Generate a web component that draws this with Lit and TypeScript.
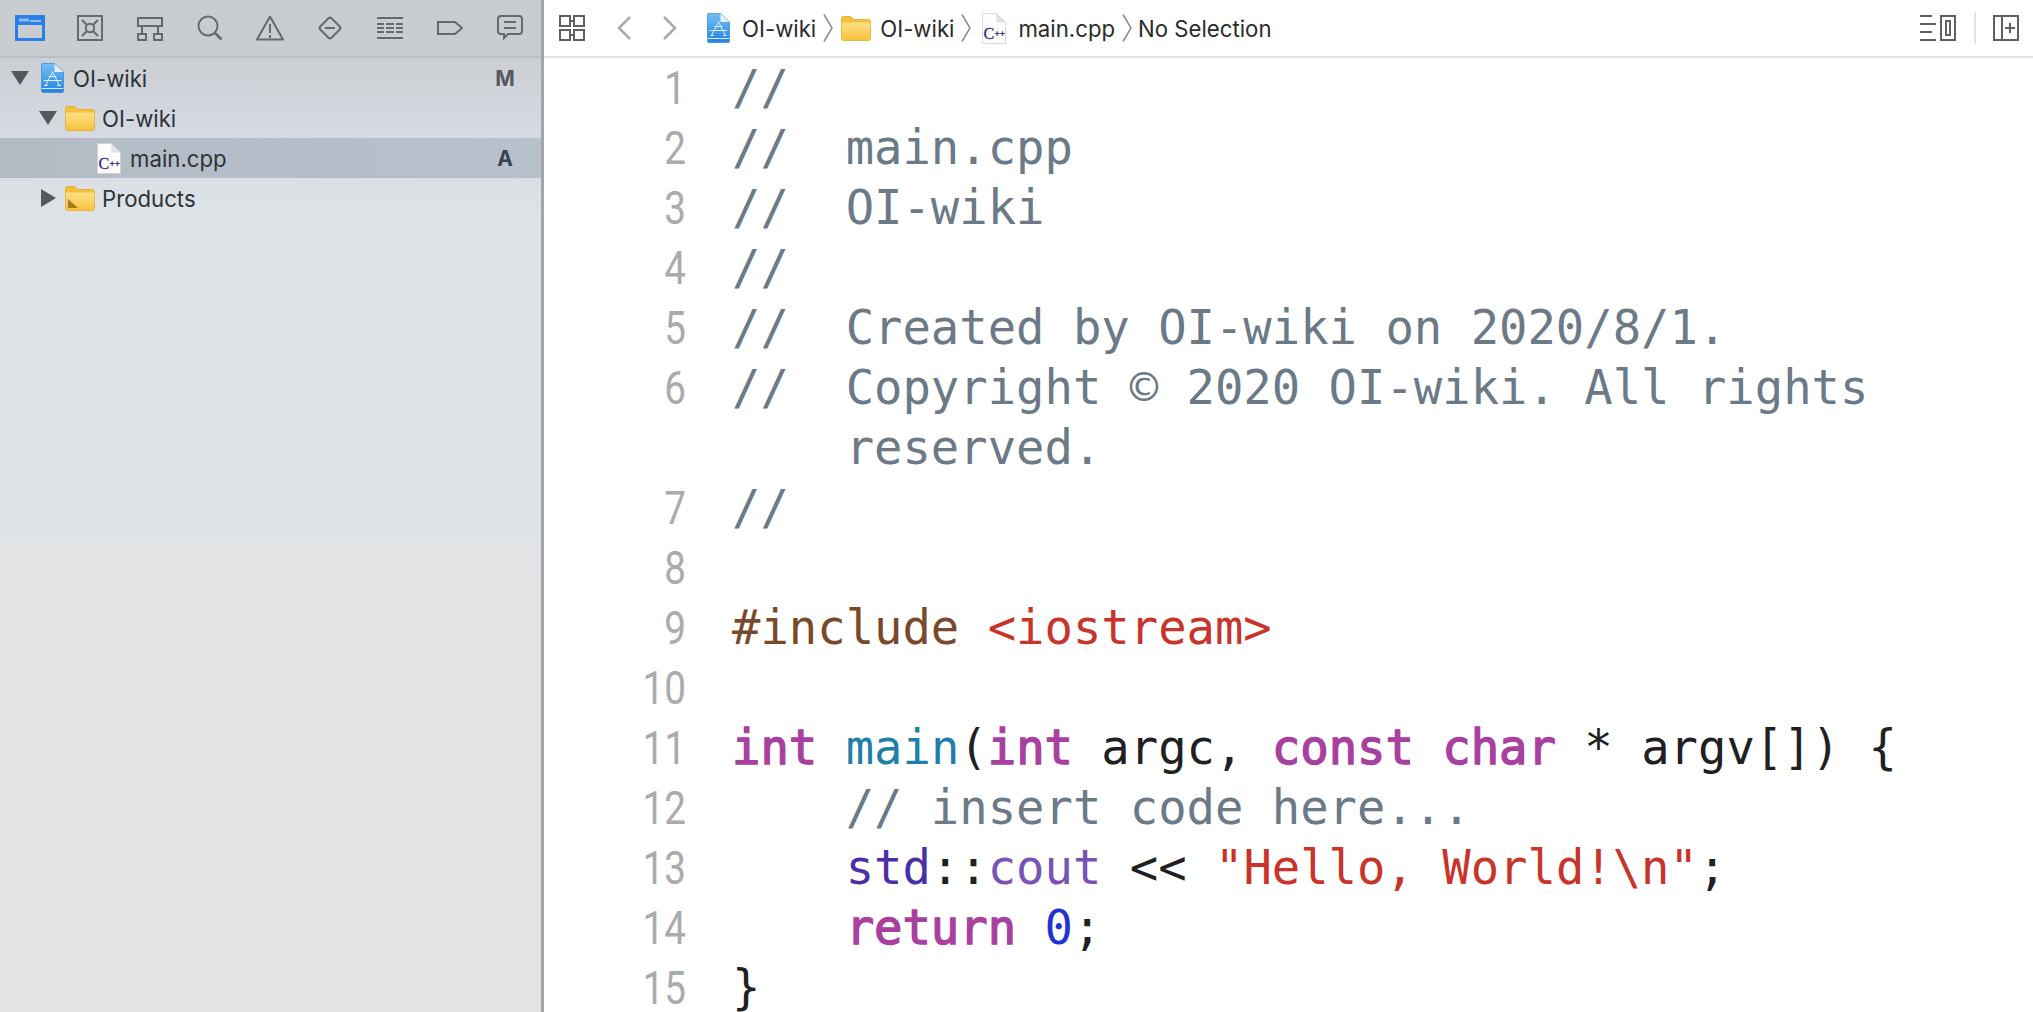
import { LitElement, html, svg, css } from "lit";
import { customElement } from "lit/decorators.js";

type Seg = [string, string];
interface Line { n?: number; segs: Seg[] }

const C = "com", K = "kw", P = "pp", S = "str", F = "fn", T = "txt", L = "lib", M = "mem", N = "num";

const LINES: Line[] = [
  { n: 1, segs: [["//", C]] },
  { n: 2, segs: [["//  main.cpp", C]] },
  { n: 3, segs: [["//  OI-wiki", C]] },
  { n: 4, segs: [["//", C]] },
  { n: 5, segs: [["//  Created by OI-wiki on 2020/8/1.", C]] },
  { n: 6, segs: [["//  Copyright © 2020 OI-wiki. All rights", C]] },
  { segs: [["    reserved.", C]] },
  { n: 7, segs: [["//", C]] },
  { n: 8, segs: [] },
  { n: 9, segs: [["#include ", P], ["<iostream>", S]] },
  { n: 10, segs: [] },
  { n: 11, segs: [["int", K], [" ", T], ["main", F], ["(", T], ["int", K], [" argc, ", T], ["const", K], [" ", T], ["char", K], [" * argv[]) {", T]] },
  { n: 12, segs: [["    // insert code here...", C]] },
  { n: 13, segs: [["    ", T], ["std", L], ["::", T], ["cout", M], [" << ", T], ["\"Hello, World!\\n\"", S], [";", T]] },
  { n: 14, segs: [["    ", T], ["return", K], [" ", T], ["0", N], [";", T]] },
  { n: 15, segs: [["}", T]] },
];

const appIcon = () => html`<svg class="ico" width="23" height="30" viewBox="0 0 23 30">
  <defs><linearGradient id="ag" x1="0" y1="0" x2="0" y2="1"><stop offset="0" stop-color="#74c0f3"/><stop offset="1" stop-color="#2283de"/></linearGradient></defs>
  <path d="M1.5 .5H13.5L22.5 9V28a1.5 1.5 0 0 1-1.5 1.5H2A1.5 1.5 0 0 1 .5 28V1.5A1 1 0 0 1 1.5 .5Z" fill="url(#ag)" stroke="#3f8fd8" stroke-width=".8"/>
  <path d="M13.5 .8V9H22.2Z" fill="#e6f3fc"/>
  <path d="M.8 25.5H22.2" stroke="#d7ecfb" stroke-width="1"/>
  <path d="M11.5 9L4.5 22.5M11.5 9L18.5 22.5M3 17.5H20M8 13.5L15 13.5M3.5 22.5H6.5M16.5 22.5H19.5" stroke="#dff0fc" stroke-width="1" fill="none" stroke-linecap="round"/>
</svg>`;

const folderIcon = (smart = false) => html`<svg class="ico" width="30" height="25" viewBox="0 0 30 25">
  <defs><linearGradient id="fg" x1="0" y1="0" x2="0" y2="1"><stop offset="0" stop-color="#fde08a"/><stop offset="1" stop-color="#f8c23c"/></linearGradient></defs>
  <path d="M.5 2.5A2 2 0 0 1 2.5 .5H9.5L12.5 3.5H27.5A2 2 0 0 1 29.5 5.5V22.5A2 2 0 0 1 27.5 24.5H2.5A2 2 0 0 1 .5 22.5Z" fill="#f5c034" stroke="#dba92e" stroke-width=".8"/>
  <path d="M.8 6.5H29.2V22.5A1.8 1.8 0 0 1 27.5 24.2H2.5A1.8 1.8 0 0 1 .8 22.5Z" fill="url(#fg)"/>
  ${smart ? svg`<path d="M3 13L13 22H3Z" fill="#a9791f"/>` : ""}
</svg>`;

const cppIcon = () => html`<svg class="ico" width="24" height="31" viewBox="0 0 24 31">
  <path d="M.5 .5H14.5L23.5 9.5V30.5H.5Z" fill="#fdfdfd" stroke="#cfcfd2" stroke-width=".8"/>
  <path d="M14.5 .8V9.5H23.2Z" fill="#dfe0e3"/>
  <text x="1.5" y="25.5" class="cpp-c">C</text>
  <text x="12.4" y="23.5" class="cpp-p">++</text>
</svg>`;

const tri = (open: boolean) => open
  ? html`<svg class="ico tri" width="18" height="14" viewBox="0 0 18 14"><path d="M0 0H18L9 14Z"/></svg>`
  : html`<svg class="ico tri" width="15" height="18" viewBox="0 0 15 18"><path d="M0 0L15 9L0 18Z"/></svg>`;

const NAV = [
  html`<svg width="30" height="26" viewBox="0 0 30 26"><path fill-rule="evenodd" fill="#2a7fe6" d="M0 0H30V26H0ZM3 10V23H27V10Z"/><path fill="#8dbdf3" d="M4 3.5H14V6.5H4ZM15 5H26V7H15Z"/></svg>`,
  html`<svg width="26" height="26" viewBox="0 0 26 26" fill="none" stroke="#67696c" stroke-width="2"><rect x="1" y="1" width="24" height="24"/><circle cx="13" cy="13" r="4.2"/><path d="M5 5L10 10M21 5L16 10M5 21L10 16M21 21L16 16"/></svg>`,
  html`<svg width="26" height="26" viewBox="0 -2 26 26" fill="none" stroke="#67696c" stroke-width="2"><rect x="1" y="1" width="24" height="8"/><rect x="1" y="17" width="8" height="6"/><rect x="17" y="17" width="8" height="6"/><path d="M5 9V17M21 9V17"/></svg>`,
  html`<svg width="26" height="26" viewBox="0 0 26 26" fill="none" stroke="#67696c" stroke-width="2"><circle cx="11" cy="11" r="9.5"/><path d="M18 18L24.5 24.5" stroke-width="2.6"/></svg>`,
  html`<svg width="28" height="26" viewBox="0 0 28 26" fill="none" stroke="#67696c" stroke-width="2"><path d="M14 1.5L27 24.5H1Z" stroke-linejoin="round"/><path d="M14 9V18M14 20V23"/></svg>`,
  html`<svg width="26" height="26" viewBox="0 0 26 26" fill="none" stroke="#67696c" stroke-width="2"><rect x="5" y="5" width="16" height="16" rx="2.5" transform="rotate(45 13 13)"/><path d="M8 13H18"/></svg>`,
  html`<svg width="26" height="22" viewBox="0 0 26 22" fill="#67696c"><path d="M0 0H26V2H0ZM0 20H26V22H0ZM0 6H7V8H0ZM9 6H17V8H9ZM19 6H26V8H19ZM0 10H7V12H0ZM9 10H17V12H9ZM19 10H26V12H19ZM0 14H7V16H0ZM9 14H17V16H9ZM19 14H26V16H19Z"/></svg>`,
  html`<svg width="26" height="14" viewBox="0 0 26 14" fill="none" stroke="#67696c" stroke-width="2"><path d="M1 1H18L25 7L18 13H1Z"/></svg>`,
  html`<svg width="26" height="26" viewBox="0 0 26 26" fill="none" stroke="#67696c" stroke-width="2"><path d="M4 1H22A3 3 0 0 1 25 4V16A3 3 0 0 1 22 19H11L7 23V19H4A3 3 0 0 1 1 16V4A3 3 0 0 1 4 1Z"/><path d="M7 7H19M7 13H19"/></svg>`,
];

const crumbSep = html`<svg class="ico sep" width="10" height="28" viewBox="0 0 10 28" fill="none" stroke="#8f8f8f" stroke-width="1.6"><path d="M1 .5L9 14L1 27.5"/></svg>`;

@customElement("app-root")
export class AppRoot extends LitElement {
  static styles = css`
    :host { display: block; width: 2033px; height: 1012px; overflow: hidden; background: #fff; font-family: Inter, "Liberation Sans", sans-serif; }
    * { box-sizing: border-box; }
    .app { display: flex; height: 1012px; }
    .ico { display: block; flex: none; }
    .cpp-c { font: 16px "Liberation Serif", serif; fill: #3b2a8c; stroke: #3b2a8c; stroke-width: .3px; }
    .cpp-p { font: 700 9px "Liberation Sans", sans-serif; fill: #3b2a8c; }

    .side { width: 544px; flex: none; border-right: 3px solid #a2a6aa; display: flex; flex-direction: column;
      background: linear-gradient(180deg, #cbcfd3 58px, #d6dbe3 138px, #dee3e6 218px, #e1e3e5 600px, #e3e4e5 100%); }
    .nav { height: 58px; flex: none; display: flex; border-bottom: 2px solid #babec2; background: linear-gradient(180deg, #c9cccf, #cacdd0); }
    .nav-item { width: 60px; height: 56px; display: flex; align-items: center; justify-content: center; }
    .row { height: 40px; display: flex; align-items: center; position: relative; font-size: 22.2px; color: #2f3236; }
    .row.sel { background: linear-gradient(90deg, #b3bcc5, #b6c1cc); }
    .row.l0 { padding-left: 11px; }
    .row.l1 { padding-left: 39px; }
    .row.l2 { padding-left: 97px; }
    .row.closed { padding-left: 41px; }
    .tri { fill: #54585c; }
    .l0 .tri { margin-right: 12px; }
    .l0 .name { margin-left: 9px; }
    .l1 .tri { margin-right: 8px; }
    .closed .tri { margin-right: 9px; }
    .l1 .name, .closed .name { margin-left: 7px; }
    .l2 .name { margin-left: 9px; }
    .badge { position: absolute; left: 491px; width: 28px; text-align: center; font-weight: 700; font-size: 21px; color: #55595e; }
    .sel .badge { color: #39434f; }

    .main { flex: 1; min-width: 0; display: flex; flex-direction: column; }
    .bar { height: 58px; flex: none; display: flex; align-items: center; border-bottom: 2px solid #e4e4e4; padding: 0 14px 0 15px; font-size: 22.2px; color: #2b2b2b; }
    .bar .sep { margin: 0 7px; }
    .grid-ico { margin-right: 32px; }
    .back { margin-right: 32px; }
    .fwd { margin-right: 30px; }
    .bar .name { margin-left: 12px; }
    .crumb-folder { margin-left: 1px; }
    .crumb-folder + .name { margin-left: 9px; }
    .crumb-file { margin-left: 4px; }
    .crumb-none { margin-left: -1px; }
    .spacer { flex: 1; }
    .rsep { width: 2px; height: 32px; background: #e2e2e2; margin: 0 17px 0 18px; }

    .editor { flex: 1; overflow: hidden; font-family: "DejaVu Sans Mono", "Liberation Mono", monospace; font-size: 47.2px; }
    .ln { display: flex; height: 60px; line-height: 60px; white-space: pre; }
    .no { width: 142px; flex: none; text-align: right; font-family: Roboto, sans-serif; font-size: 46px; color: #a9abad; transform: scaleX(.84); transform-origin: right center; }
    .code { margin-left: 46px; color: #1f1f24; }
    .com { color: #6c7986; }
    .kw { color: #a9409f; -webkit-text-stroke: 1.4px #a9409f; }
    .pp { color: #78492a; }
    .str { color: #c8332a; }
    .fn { color: #1f7fa8; }
    .lib { color: #4a2fa8; }
    .mem { color: #7a52b4; }
    .num { color: #2233d0; }
  `;

  render() {
    return html`<div class="app">
      <aside class="side">
        <div class="nav">${NAV.map((i) => html`<div class="nav-item">${i}</div>`)}</div>
        <div class="row l0">${tri(true)}${appIcon()}<span class="name">OI-wiki</span><span class="badge">M</span></div>
        <div class="row l1">${tri(true)}${folderIcon()}<span class="name">OI-wiki</span></div>
        <div class="row l2 sel">${cppIcon()}<span class="name">main.cpp</span><span class="badge">A</span></div>
        <div class="row closed">${tri(false)}${folderIcon(true)}<span class="name">Products</span></div>
      </aside>
      <main class="main">
        <div class="bar">
          <svg class="ico grid-ico" width="26" height="26" viewBox="0 0 26 26" fill="none" stroke="#5f6164" stroke-width="2"><path d="M1 1H11V11H1ZM15 1H25V11H15ZM1 15H11V25H1ZM15 15H25V25H15ZM11 6H15M15 20H11"/></svg>
          <svg class="ico back" width="14" height="24" viewBox="0 0 14 24" fill="none" stroke="#ababab" stroke-width="2.6"><path d="M13 1L2 12L13 23"/></svg>
          <svg class="ico fwd" width="14" height="24" viewBox="0 0 14 24" fill="none" stroke="#ababab" stroke-width="2.6"><path d="M1 1L12 12L1 23"/></svg>
          ${appIcon()}<span class="name">OI-wiki</span>${crumbSep}
          <span class="crumb-folder">${folderIcon()}</span><span class="name">OI-wiki</span>${crumbSep}
          <span class="crumb-file">${cppIcon()}</span><span class="name">main.cpp</span>${crumbSep}
          <span class="crumb-none">No Selection</span>
          <span class="spacer"></span>
          <svg class="ico" width="36" height="26" viewBox="0 0 36 26" fill="#5f6164"><path d="M0 0H12V2H0ZM0 8H16V10H0ZM0 16H12V18H0ZM0 24H16V26H0Z"/><path fill-rule="evenodd" d="M20 0H36V26H20ZM22 2V24H34V2ZM25 5H31V21H25ZM27 7V19H29V7Z"/></svg>
          <div class="rsep"></div>
          <svg class="ico" width="26" height="26" viewBox="0 0 26 26" fill="none" stroke="#5f6164" stroke-width="2"><rect x="1" y="1" width="24" height="24"/><path d="M9 1V25M12 13H22M17 8V18"/></svg>
        </div>
        <div class="editor">
          ${LINES.map((l) => html`<div class="ln"><span class="no">${l.n ?? ""}</span><span class="code">${l.segs.map(([t, c]) => html`<span class=${c}>${t}</span>`)}</span></div>`)}
        </div>
      </main>
    </div>`;
  }
}
